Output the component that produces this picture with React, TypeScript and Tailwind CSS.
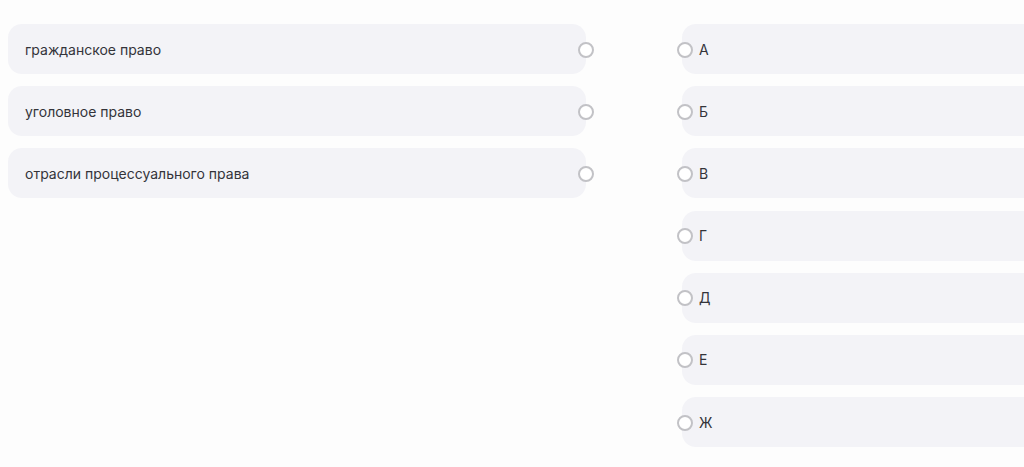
import React from 'react';

const leftItems = ['гражданское право', 'уголовное право', 'отрасли процессуального права'];
const rightItems = ['А', 'Б', 'В', 'Г', 'Д', 'Е', 'Ж'];

const Radio: React.FC<{ className?: string }> = ({ className = '' }) => (
  <span
    className={`relative z-10 h-[16px] w-[16px] shrink-0 rounded-full border-2 border-[#c2c2c6] bg-white ${className}`}
  />
);

export default function App() {
  return (
    <div
      className="h-[467px] w-[1024px] overflow-hidden bg-[#fdfdfd] text-[14px] text-[#34343a]"
      style={{ fontFamily: 'Inter, "Noto Sans", sans-serif' }}
    >
      <div className="flex pt-[24px] pl-[8px]">
        <div className="flex w-[586px] flex-col gap-[12.2px]">
          {leftItems.map((item) => (
            <div key={item} className="flex items-center">
              <div className="flex h-[50px] w-[578px] items-center rounded-[14px] bg-[#f3f3f7] pl-[17px]">
                {item}
              </div>
              <Radio className="-ml-[8px] mt-[1px]" />
            </div>
          ))}
        </div>

        <div className="ml-[83px] flex flex-col gap-[12.2px]">
          {rightItems.map((item) => (
            <div key={item} className="flex items-center">
              <Radio className="mt-[1px]" />
              <div className="-ml-[11px] flex h-[50px] w-[400px] items-center rounded-[14px] bg-[#f3f3f7] pl-[17px]">
                {item}
              </div>
            </div>
          ))}
        </div>
      </div>
    </div>
  );
}
